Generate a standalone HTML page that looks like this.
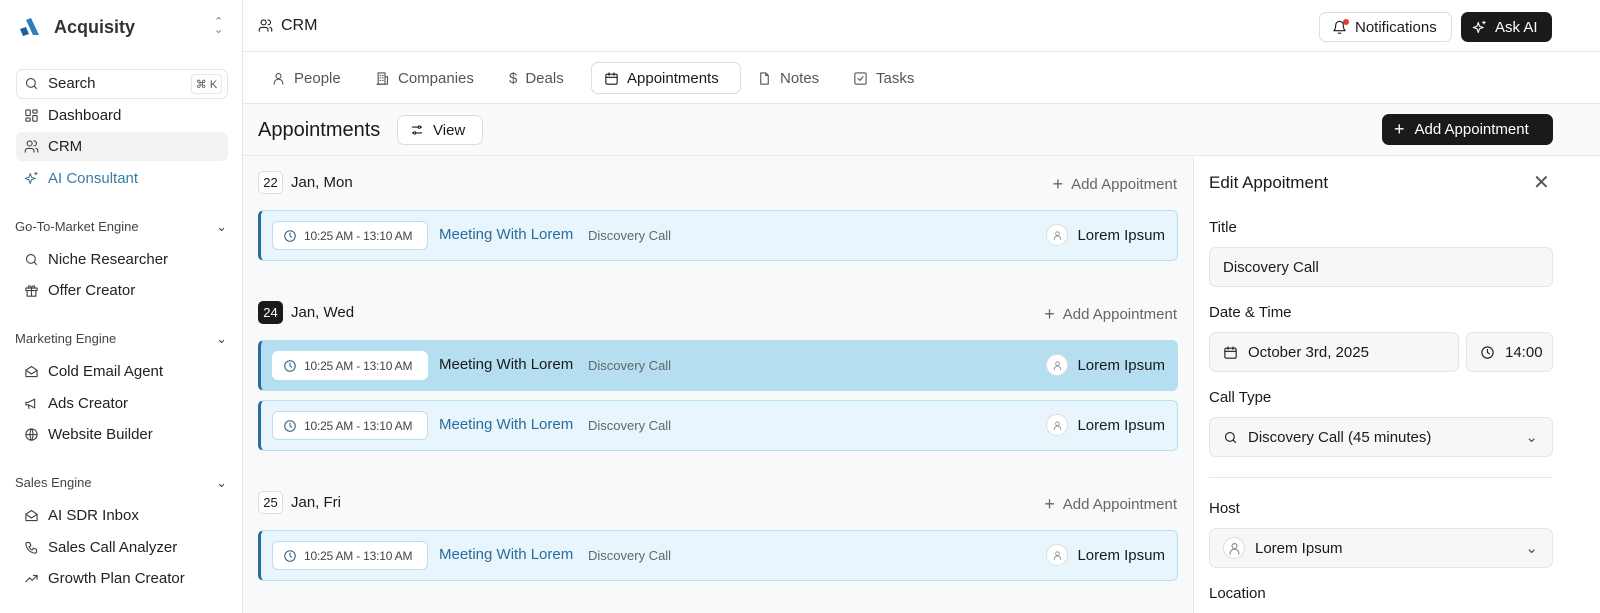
<!DOCTYPE html><html><head><meta charset="utf-8"><style>
*{box-sizing:border-box;margin:0;padding:0}
body{width:1600px;height:613px;overflow:hidden;font-family:"Liberation Sans",sans-serif;color:#1a1a1a;background:#fff;position:relative}
.abs{position:absolute}
svg{fill:none;stroke:currentColor;stroke-width:1.8;stroke-linecap:round;stroke-linejoin:round}
.side{left:0;top:0;width:243px;height:613px;border-right:1px solid #e5e7eb;background:#fff}
.ni{position:absolute;left:16px;width:212px;height:29px;display:flex;align-items:center;padding-left:8px;font-size:15px;color:#222;gap:9px;border-radius:6px}
.ni svg{width:15px;height:15px;color:#444}
.sec{position:absolute;left:15px;width:212px;font-size:13px;color:#444;display:flex;justify-content:space-between}
.tab{position:absolute;top:62px;height:32px;display:flex;align-items:center;gap:8px;font-size:15px;color:#555;padding:0 12px}
.tab svg{width:15px;height:15px}
.day{position:absolute;left:258px;display:flex;align-items:center;gap:8px;font-size:15px}
.dn{border:1px solid #ddd;border-radius:5px;width:25px;height:23px;display:flex;align-items:center;justify-content:center;font-size:13px;background:#fff}
.add{position:absolute;right:423px;font-size:15px;color:#666;display:flex;gap:8px;align-items:center}
.row{position:absolute;left:258px;width:920px;height:51px;background:#e8f5fc;border:1px solid #b9dff2;border-left:3px solid #2b6c9e;border-radius:6px}
.row.act{background:#b5dff0;border-color:#b5dff0;border-left-color:#2b6c9e}
.tm{position:absolute;left:11px;top:10px;width:156px;height:29px;border:1px solid #b9dff2;background:#fff;border-radius:6px;font-size:12px;letter-spacing:-0.2px;color:#444;display:flex;align-items:center;gap:7px;padding-left:10px;white-space:nowrap;overflow:hidden}
.row.act .tm{border-color:#fff}
.tm svg{width:14px;height:14px;color:#2b5f8a;flex:none}
.mt{position:absolute;left:178px;top:15px;font-size:15px;color:#2b6c9e}
.row.act .mt{color:#1a1a1a}
.dc{position:absolute;left:327px;top:17px;font-size:13px;color:#666}
.ps{position:absolute;right:12px;top:13px;display:flex;align-items:center;gap:9px;font-size:15px}
.av{width:22px;height:22px;border-radius:50%;background:#fff;border:1px solid #ddd;display:flex;align-items:center;justify-content:center}
.av svg{width:11px;height:11px;color:#888}
.lbl{position:absolute;left:1209px;font-size:15px}
.inp{position:absolute;height:40px;border:1px solid #e3e5e8;background:#f6f7f8;border-radius:7px;display:flex;align-items:center;gap:10px;padding-left:13px;font-size:15px}
.inp svg{width:15px;height:15px}
</style></head><body>
<div class="abs side">
 <svg class="abs" style="left:18px;top:18px;width:22px;height:20px;stroke:none" viewBox="0 0 22 20"><path d="M8 2 L13 0 L21 17 L15 17 Z" fill="#2b7fc0"/><path d="M2 11 L8 9 L11 16 L5 18 Z" fill="#1a5f9e"/></svg>
 <div class="abs" style="left:54px;top:17px;font-size:18px;font-weight:bold;color:#333">Acquisity</div>
 <div class="abs" style="left:214px;top:18px;font-size:11px;color:#777;line-height:8px">⌃<br>⌄</div>
 <div class="abs" style="left:16px;top:69px;width:212px;height:30px;border:1px solid #e3e5e8;border-radius:7px"></div>
 <div class="ni" style="top:69px"><svg viewBox="0 0 24 24"><circle cx="11" cy="11" r="7"/><path d="M20 20l-4-4"/></svg>Search</div>
 <div class="abs" style="left:191px;top:74px;width:31px;height:20px;border:1px solid #e3e5e8;border-radius:4px;font-size:11px;color:#555;display:flex;align-items:center;justify-content:center">⌘ K</div>
 <div class="ni" style="top:101px"><svg viewBox="0 0 24 24"><rect x="3" y="3" width="7" height="9" rx="1"/><rect x="14" y="3" width="7" height="5" rx="1"/><rect x="14" y="12" width="7" height="9" rx="1"/><rect x="3" y="16" width="7" height="5" rx="1"/></svg>Dashboard</div>
 <div class="ni" style="top:132px;background:#f1f2f4"><svg viewBox="0 0 24 24"><circle cx="9" cy="7" r="4"/><path d="M2 21v-2a4 4 0 014-4h6a4 4 0 014 4v2M16 3a4 4 0 010 8M22 21v-2a4 4 0 00-3-4"/></svg>CRM</div>
 <div class="ni" style="top:164px;color:#3a7ca5"><svg viewBox="0 0 24 24" style="color:#3a7ca5"><path d="M10 4l2 6 6 2-6 2-2 6-2-6-6-2 6-2z"/><path d="M19 2v4M17 4h4"/></svg>AI Consultant</div>
 <div class="sec" style="top:219px">Go-To-Market Engine<span>⌄</span></div>
 <div class="ni" style="top:245px"><svg viewBox="0 0 24 24"><circle cx="11" cy="11" r="7"/><path d="M20 20l-4-4"/></svg>Niche Researcher</div>
 <div class="ni" style="top:276px"><svg viewBox="0 0 24 24"><rect x="3" y="8" width="18" height="4"/><path d="M5 12v9h14v-9M12 8v13M12 8c-2-5-6-4-5-1 0 1 5 1 5 1 0 0 5 0 5-1 1-3-3-4-5 1"/></svg>Offer Creator</div>
 <div class="sec" style="top:331px">Marketing Engine<span>⌄</span></div>
 <div class="ni" style="top:357px"><svg viewBox="0 0 24 24"><path d="M3 10l9-6 9 6v10H3z M3 10l9 6 9-6"/></svg>Cold Email Agent</div>
 <div class="ni" style="top:389px"><svg viewBox="0 0 24 24"><path d="M3 10v4h4l10 5V5L7 10z M7 14l1 6"/></svg>Ads Creator</div>
 <div class="ni" style="top:420px"><svg viewBox="0 0 24 24"><circle cx="12" cy="12" r="9"/><path d="M3 12h18M12 3c3 3 3 15 0 18M12 3c-3 3-3 15 0 18"/></svg>Website Builder</div>
 <div class="sec" style="top:475px">Sales Engine<span>⌄</span></div>
 <div class="ni" style="top:501px"><svg viewBox="0 0 24 24"><path d="M3 10l9-6 9 6v10H3z M3 10l9 6 9-6"/></svg>AI SDR Inbox</div>
 <div class="ni" style="top:533px"><svg viewBox="0 0 24 24"><path d="M5 4h4l2 5-3 2a11 11 0 005 5l2-3 5 2v4a2 2 0 01-2 2A16 16 0 013 6a2 2 0 012-2"/></svg>Sales Call Analyzer</div>
 <div class="ni" style="top:564px"><svg viewBox="0 0 24 24"><path d="M3 17l6-6 4 4 8-8M15 7h6v6"/></svg>Growth Plan Creator</div>
</div>
<div class="abs" style="left:243px;top:0;width:1357px;height:52px;border-bottom:1px solid #e5e7eb;background:#fff"></div>
<svg class="abs" style="left:258px;top:18px;width:15px;height:15px" viewBox="0 0 24 24"><circle cx="9" cy="7" r="4"/><path d="M2 21v-2a4 4 0 014-4h6a4 4 0 014 4v2M16 3a4 4 0 010 8M22 21v-2a4 4 0 00-3-4"/></svg>
<div class="abs" style="left:281px;top:17px;font-size:16px">CRM</div>
<div class="abs" style="left:1319px;top:12px;width:133px;height:30px;border:1px solid #ddd;border-radius:7px;display:flex;align-items:center;gap:8px;padding-left:12px;font-size:15px"><svg viewBox="0 0 24 24" style="width:15px;height:15px"><path d="M6 8a6 6 0 0112 0c0 7 3 9 3 9H3s3-2 3-9M10 21h4"/></svg>Notifications<span class="abs" style="left:23px;top:6px;width:6px;height:6px;border-radius:50%;background:#e53935"></span></div>
<div class="abs" style="left:1461px;top:12px;width:91px;height:30px;background:#1a1a1a;border-radius:7px;display:flex;align-items:center;gap:8px;padding-left:11px;font-size:15px;color:#fff"><svg viewBox="0 0 24 24" style="width:15px;height:15px"><path d="M10 4l2 6 6 2-6 2-2 6-2-6-6-2 6-2z"/><path d="M19 2v4M17 4h4"/></svg>Ask AI</div>
<div class="abs" style="left:243px;top:52px;width:1357px;height:52px;border-bottom:1px solid #e5e7eb;background:#fff"></div>
<div class="tab" style="left:259px"><svg viewBox="0 0 24 24"><circle cx="12" cy="8" r="4"/><path d="M5 21v-1a6 6 0 0114 0v1"/></svg>People</div>
<div class="tab" style="left:363px"><svg viewBox="0 0 24 24"><rect x="5" y="3" width="11" height="18"/><path d="M16 9h4v12H3M8 7h1M12 7h1M8 11h1M12 11h1M8 15h1M12 15h1"/></svg>Companies</div>
<div class="tab" style="left:497px"><span style="font-size:15px">$</span>Deals</div>
<div class="tab" style="left:591px;width:150px;border:1px solid #ddd;border-radius:7px;color:#1a1a1a"><svg viewBox="0 0 24 24"><rect x="3" y="5" width="18" height="16" rx="2"/><path d="M3 10h18M8 3v4M16 3v4"/></svg>Appointments</div>
<div class="tab" style="left:745px"><svg viewBox="0 0 24 24"><path d="M14 3H6v18h12V7z M14 3v4h4"/></svg>Notes</div>
<div class="tab" style="left:841px"><svg viewBox="0 0 24 24"><rect x="3" y="3" width="18" height="18" rx="2"/><path d="M8 12l3 3 5-6"/></svg>Tasks</div>
<div class="abs" style="left:243px;top:104px;width:1357px;height:52px;border-bottom:1px solid #e5e7eb;background:#fafafa"></div>
<div class="abs" style="left:258px;top:119px;font-size:20px">Appointments</div>
<div class="abs" style="left:397px;top:115px;width:86px;height:30px;border:1px solid #ddd;border-radius:7px;background:#fff;display:flex;align-items:center;gap:9px;padding-left:12px;font-size:15px"><svg viewBox="0 0 24 24" style="width:14px;height:14px"><path d="M4 7h10M18 7h2M4 17h2M10 17h10"/><circle cx="16" cy="7" r="2"/><circle cx="8" cy="17" r="2"/></svg>View</div>
<div class="abs" style="left:1382px;top:114px;width:171px;height:31px;background:#1a1a1a;border-radius:7px;color:#fff;font-size:15px;display:flex;align-items:center;gap:10px;padding-left:12px"><span style="font-size:18px">+</span>Add Appointment</div>
<div class="abs" style="left:243px;top:157px;width:951px;height:456px;background:#f8f9fa"></div>
<div class="day" style="top:171px"><span class="dn">22</span>Jan, Mon</div>
<div class="add" style="top:174px"><span style="font-size:18px">+</span>Add Appoitment</div>
<div class="day" style="top:301px"><span class="dn" style="background:#1a1a1a;color:#fff;border-color:#1a1a1a">24</span>Jan, Wed</div>
<div class="add" style="top:304px"><span style="font-size:18px">+</span>Add Appointment</div>
<div class="day" style="top:491px"><span class="dn">25</span>Jan, Fri</div>
<div class="add" style="top:494px"><span style="font-size:18px">+</span>Add Appointment</div>
<div class="row" style="top:210px"><div class="tm"><svg viewBox="0 0 24 24"><circle cx="12" cy="12" r="9"/><path d="M12 7v5l3 2"/></svg>10:25 AM - 13:10 AM</div><div class="mt">Meeting With Lorem</div><div class="dc">Discovery Call</div><div class="ps"><span class="av"><svg viewBox="0 0 24 24"><circle cx="12" cy="8" r="4"/><path d="M5 21v-1a6 6 0 0114 0v1"/></svg></span>Lorem Ipsum</div></div>
<div class="row act" style="top:340px"><div class="tm"><svg viewBox="0 0 24 24"><circle cx="12" cy="12" r="9"/><path d="M12 7v5l3 2"/></svg>10:25 AM - 13:10 AM</div><div class="mt">Meeting With Lorem</div><div class="dc">Discovery Call</div><div class="ps"><span class="av"><svg viewBox="0 0 24 24"><circle cx="12" cy="8" r="4"/><path d="M5 21v-1a6 6 0 0114 0v1"/></svg></span>Lorem Ipsum</div></div>
<div class="row" style="top:400px"><div class="tm"><svg viewBox="0 0 24 24"><circle cx="12" cy="12" r="9"/><path d="M12 7v5l3 2"/></svg>10:25 AM - 13:10 AM</div><div class="mt">Meeting With Lorem</div><div class="dc">Discovery Call</div><div class="ps"><span class="av"><svg viewBox="0 0 24 24"><circle cx="12" cy="8" r="4"/><path d="M5 21v-1a6 6 0 0114 0v1"/></svg></span>Lorem Ipsum</div></div>
<div class="row" style="top:530px"><div class="tm"><svg viewBox="0 0 24 24"><circle cx="12" cy="12" r="9"/><path d="M12 7v5l3 2"/></svg>10:25 AM - 13:10 AM</div><div class="mt">Meeting With Lorem</div><div class="dc">Discovery Call</div><div class="ps"><span class="av"><svg viewBox="0 0 24 24"><circle cx="12" cy="8" r="4"/><path d="M5 21v-1a6 6 0 0114 0v1"/></svg></span>Lorem Ipsum</div></div>
<div class="abs" style="left:1193px;top:157px;width:1px;height:456px;background:#e5e7eb"></div>
<div class="abs" style="left:1209px;top:173px;font-size:17px">Edit Appoitment</div>
<div class="abs" style="left:1533px;top:170px;font-size:20px;color:#555">✕</div>
<div class="lbl" style="top:219px">Title</div>
<div class="inp" style="left:1209px;top:247px;width:344px">Discovery Call</div>
<div class="lbl" style="top:304px">Date &amp; Time</div>
<div class="inp" style="left:1209px;top:332px;width:250px"><svg viewBox="0 0 24 24"><rect x="3" y="5" width="18" height="16" rx="2"/><path d="M3 10h18M8 3v4M16 3v4"/></svg>October 3rd, 2025</div>
<div class="inp" style="left:1466px;top:332px;width:87px"><svg viewBox="0 0 24 24"><circle cx="12" cy="12" r="9"/><path d="M12 7v5l3 2"/></svg>14:00</div>
<div class="lbl" style="top:389px">Call Type</div>
<div class="inp" style="left:1209px;top:417px;width:344px"><svg viewBox="0 0 24 24"><circle cx="11" cy="11" r="7"/><path d="M20 20l-4-4"/></svg>Discovery Call (45 minutes)<span class="abs" style="right:14px;top:10px;color:#555">⌄</span></div>
<div class="abs" style="left:1209px;top:477px;width:344px;height:1px;background:#e5e7eb"></div>
<div class="lbl" style="top:500px">Host</div>
<div class="inp" style="left:1209px;top:528px;width:344px"><span class="av"><svg viewBox="0 0 24 24"><circle cx="12" cy="8" r="4"/><path d="M5 21v-1a6 6 0 0114 0v1"/></svg></span>Lorem Ipsum<span class="abs" style="right:14px;top:10px;color:#555">⌄</span></div>
<div class="lbl" style="top:585px">Location</div>
</body></html>
